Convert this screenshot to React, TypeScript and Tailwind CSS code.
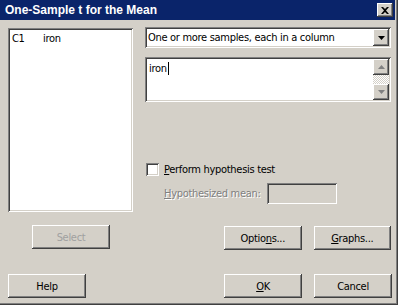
import React from "react";

const raised =
  "shadow-[inset_-1px_-1px_0_#404040,inset_1px_1px_0_#ffffff,inset_-2px_-2px_0_#808080,inset_2px_2px_0_#d4d0c8]";
const sunken =
  "shadow-[inset_1px_1px_0_#808080,inset_-1px_-1px_0_#ffffff,inset_2px_2px_0_#404040,inset_-2px_-2px_0_#d4d0c8]";

function Btn({ children, disabled, className = "" }: { children: React.ReactNode; disabled?: boolean; className?: string }) {
  return (
    <div
      className={`w-[78px] h-[24px] bg-[#d4d0c8] flex items-center justify-center ${raised} ${
        disabled ? "text-[#a0a0a0]" : "text-black"
      } ${className}`}
    >
      {children}
    </div>
  );
}

export default function App() {
  return (
    <div
      className="relative w-[398px] h-[305px] bg-[#d4d0c8] overflow-hidden text-[11px] leading-none tracking-[-0.3px] whitespace-nowrap text-black shadow-[inset_-1px_-1px_0_#404040,inset_-2px_-2px_0_#808080]"
      style={{ fontFamily: '"DejaVu Sans Condensed", "DejaVu Sans", sans-serif' }}
    >
      {/* title bar */}
      <div className="w-[395px] h-[20px] bg-[#0a246a] flex items-center justify-between pl-[5px] pr-[2px]">
        <span
          className="text-white font-bold text-[12px] tracking-normal"
          style={{ fontFamily: '"Liberation Sans", Arial, sans-serif' }}
        >
          One-Sample t for the Mean
        </span>
        <div className={`w-[16px] h-[14px] bg-[#d4d0c8] flex items-center justify-center ${raised}`}>
          <svg width="8" height="7" viewBox="0 0 8 7">
            <path d="M0 0h2l2 2 2-2h2L5 3.5 8 7H6L4 5 2 7H0l3-3.5z" fill="#000" />
          </svg>
        </div>
      </div>

      <div className="flex flex-col pl-[8px]">
        <div className="flex">
          {/* left column */}
          <div className="flex flex-col w-[125px] mt-[8px]">
            <div className={`h-[184px] bg-white ${sunken} pt-[5px] pl-[4px] flex`}>
              <span className="w-[31px]">C1</span>
              <span>iron</span>
            </div>
            <Btn disabled className="mt-[13px] ml-[24px]">Select</Btn>
          </div>

          {/* right column */}
          <div className="flex flex-col w-[246px] ml-[12px] mt-[7px]">
            <div className={`h-[21px] bg-white ${sunken} flex items-center justify-between pl-[3px] pr-[2px]`}>
              <span>One or more samples, each in a column</span>
              <div className={`w-[16px] h-[17px] bg-[#d4d0c8] flex items-center justify-center ${raised}`}>
                <svg width="7" height="4" viewBox="0 0 7 4">
                  <path d="M0 0h7L3.5 4z" fill="#000" />
                </svg>
              </div>
            </div>

            <div className={`mt-[9px] h-[45px] bg-white ${sunken} flex justify-between p-[2px]`}>
              <div className="pt-[4px] pl-[2px] flex items-start">
                <span>iron</span>
                <span className="w-px h-[13px] bg-black -mt-[1px] ml-[1px]" />
              </div>
              <div className="w-[16px] flex flex-col">
                <div className={`h-[16px] bg-[#d4d0c8] flex items-center justify-center ${raised}`}>
                  <svg width="7" height="4" viewBox="0 0 7 4">
                    <path d="M3.5 0L7 4H0z" fill="#808080" />
                  </svg>
                </div>
                <div
                  className="flex-1"
                  style={{
                    backgroundColor: "#d4d0c8",
                    backgroundImage:
                      "repeating-conic-gradient(#ffffff 0% 25%, #d4d0c8 0% 50%)",
                    backgroundSize: "2px 2px",
                  }}
                />
                <div className={`h-[16px] bg-[#d4d0c8] flex items-center justify-center ${raised}`}>
                  <svg width="7" height="4" viewBox="0 0 7 4">
                    <path d="M0 0h7L3.5 4z" fill="#808080" />
                  </svg>
                </div>
              </div>
            </div>

            <div className="mt-[61px] h-[13px] flex items-center">
              <div className={`w-[13px] h-[13px] bg-white ${sunken} ml-[1px]`} />
              <span className="ml-[5px]">
                <span className="underline">P</span>erform hypothesis test
              </span>
            </div>

            <div className="mt-[7px] h-[21px] flex items-center">
              <span className="ml-[19px] w-[103px] text-[#808080] [text-shadow:1px_1px_0_#ffffff]">
                <span className="underline">H</span>ypothesized mean:
              </span>
              <div className={`w-[70px] h-[21px] bg-[#d4d0c8] ${sunken}`} />
            </div>

            <div className="mt-[22px] flex gap-[12px] ml-[79px]">
              <Btn>
                Optio<span className="underline">n</span>s...
              </Btn>
              <Btn>
                <span className="underline">G</span>raphs...
              </Btn>
            </div>
          </div>
        </div>

        <div className="flex mt-[24px]">
          <Btn>Help</Btn>
          <Btn className="ml-[138px]">
            <span className="underline">O</span>K
          </Btn>
          <Btn className="ml-[12px]">Cancel</Btn>
        </div>
      </div>
    </div>
  );
}
